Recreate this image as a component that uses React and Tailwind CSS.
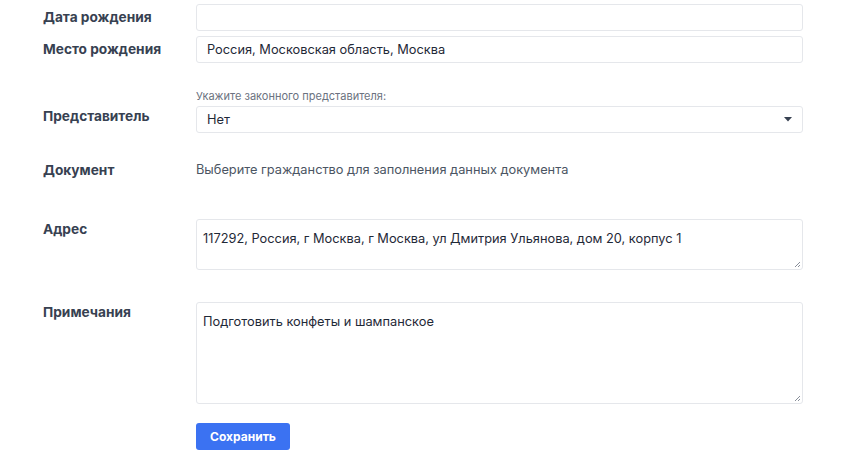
export default function App() {
  const f = { fontFamily: "Inter, 'Noto Sans', sans-serif" };
  const label = "w-[153px] shrink-0 text-[13.7px] font-bold text-[#374151]";
  const box = "flex-1 border border-[#e5e7eb] rounded-[3px] bg-white";
  return (
    <div style={f} className="w-[860px] h-[460px] bg-white pl-[43px] pr-[57px] pt-[4px] text-[#1f2937]">
      <div className="flex items-center h-[27px]">
        <div className={label}>Дата рождения</div>
        <div className={box + " h-[27px]"}></div>
      </div>
      <div className="flex items-center h-[27px] mt-[5px]">
        <div className={label}>Место рождения</div>
        <div className={box + " h-[27px] flex items-center px-[10px] text-[12.8px]"}>Россия, Московская область, Москва</div>
      </div>
      <div className="flex mt-[26px]">
        <div className={label + " pt-[17px]"}>Представитель</div>
        <div className="flex-1">
          <div className="text-[11px] text-[#6b7280] h-[17px] leading-[14px]">Укажите законного представителя:</div>
          <div className={box + " h-[27px] flex items-center justify-between px-[10px] text-[12.8px]"}>
            <span>Нет</span>
            <svg width="8" height="5" viewBox="0 0 8 5"><path d="M0 0h8L4 4.5z" fill="#374151"/></svg>
          </div>
        </div>
      </div>
      <div className="flex items-center mt-[27px] h-[20px]">
        <div className={label}>Документ</div>
        <div className="text-[12.8px] text-[#4b5563]">Выберите гражданство для заполнения данных документа</div>
      </div>
      <div className="flex mt-[39px]">
        <div className={label}>Адрес</div>
        <div className={box + " h-[51px] relative px-[6px] pt-[9px] text-[12.8px]"}>
          117292, Россия, г Москва, г Москва, ул Дмитрия Ульянова, дом 20, корпус 1
          <Grip />
        </div>
      </div>
      <div className="flex mt-[32px]">
        <div className={label}>Примечания</div>
        <div className={box + " h-[102px] relative px-[6px] pt-[9px] text-[12.8px]"}>
          Подготовить конфеты и шампанское
          <Grip />
        </div>
      </div>
      <div className="flex mt-[19px]">
        <div className="w-[153px] shrink-0"></div>
        <button className="w-[94px] h-[27px] rounded-[3px] bg-[#3b72f2] text-white text-[12px] font-bold">Сохранить</button>
      </div>
    </div>
  );
}
function Grip() {
  return (
    <svg className="absolute right-[2px] bottom-[2px]" width="6" height="6" viewBox="0 0 6 6">
      <path d="M6 1L1 6M6 4L4 6" stroke="#6b7280" strokeWidth="0.8"/>
    </svg>
  );
}
